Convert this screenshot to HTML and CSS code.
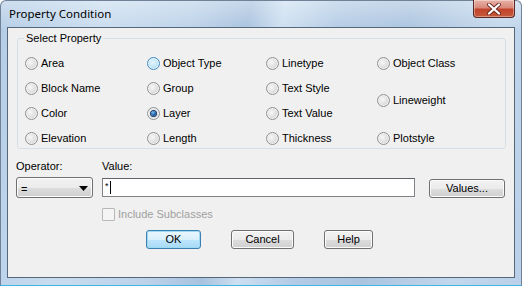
FILE: index.html
```html
<!DOCTYPE html>
<html lang="en">
<head>
    <meta charset="UTF-8">
    <title>Property Condition</title>
    <link rel="stylesheet" href="styles.css">
</head>
<body>
    <div class="window">
        <div class="titlebar">
            <span class="title">Property Condition</span>
            <div class="close">
                <svg width="16" height="12" viewBox="0 0 16 12">
                    <path d="M3 1.5 L13 10.5 M13 1.5 L3 10.5" stroke="#6b2b22" stroke-width="4" stroke-linecap="round"/>
                    <path d="M3 1.5 L13 10.5 M13 1.5 L3 10.5" stroke="#ffffff" stroke-width="2.2" stroke-linecap="round"/>
                </svg>
            </div>
        </div>

        <div class="client">
            <fieldset class="group">
                <legend>Select Property</legend>
                <div class="props">
                    <div class="opt"><span class="radio"></span>Area</div>
                    <div class="opt"><span class="radio hover"></span>Object Type</div>
                    <div class="opt"><span class="radio"></span>Linetype</div>
                    <div class="opt"><span class="radio"></span>Object Class</div>

                    <div class="opt"><span class="radio"></span>Block Name</div>
                    <div class="opt"><span class="radio"></span>Group</div>
                    <div class="opt"><span class="radio"></span>Text Style</div>
                    <div class="opt span2"><span class="radio"></span>Lineweight</div>

                    <div class="opt"><span class="radio"></span>Color</div>
                    <div class="opt"><span class="radio checked"></span>Layer</div>
                    <div class="opt"><span class="radio"></span>Text Value</div>

                    <div class="opt"><span class="radio"></span>Elevation</div>
                    <div class="opt"><span class="radio"></span>Length</div>
                    <div class="opt"><span class="radio"></span>Thickness</div>
                    <div class="opt"><span class="radio"></span>Plotstyle</div>
                </div>
            </fieldset>

            <div class="fields">
                <div class="field-label">Operator:</div>
                <div class="field-label">Value:</div>
                <div></div>

                <div class="select">
                    <span>=</span>
                    <svg width="9" height="5" viewBox="0 0 9 5"><path d="M0 0 H9 L4.5 5 Z" fill="#000"/></svg>
                </div>
                <div class="input"><span class="star">*</span><span class="caret"></span></div>
                <div class="btn values">Values...</div>

                <div></div>
                <div class="check"><span class="box"></span>Include Subclasses</div>
                <div></div>
            </div>

            <div class="actions">
                <div class="btn default ok">OK</div>
                <div class="btn cancel">Cancel</div>
                <div class="btn help">Help</div>
            </div>
        </div>
    </div>
</body>
</html>
```

FILE: styles.css
```css
body {
    margin: 0;
    font-family: "Liberation Sans", Arial, sans-serif;
    font-size: 11px;
    color: #000;
}
.window {
    width: 522px;
    height: 286px;
    box-sizing: border-box;
    display: flex;
    flex-direction: column;
    padding: 0 6px 7px 6px;
    border: 1px solid #6f8297;
    border-bottom-color: #3fb4e6;
    border-radius: 6px 6px 0 0;
    background:
        linear-gradient(to bottom, rgba(255,255,255,0.35), rgba(255,255,255,0) 30px),
        linear-gradient(100deg, #b4cde6 0%, #c9dcef 18%, #bcd2e9 34%, #a8c2de 44%, #cddff1 50%, #b3cbe5 60%, #aac4df 72%, #c3d7ec 88%, #b9d0e8 100%);
}
.titlebar {
    height: 26px;
    display: flex;
    justify-content: space-between;
    align-items: flex-start;
}
.title {
    font-family: "Noto Sans", sans-serif;
    font-size: 11.5px;
    line-height: 16px;
    padding: 5px 0 0 2px;
    color: #000;
}
.close {
    width: 40px;
    height: 17px;
    margin-top: -1px;
    border: 1px solid #5c2a24;
    border-top: none;
    border-radius: 0 0 4px 4px;
    display: flex;
    align-items: center;
    justify-content: center;
    background: linear-gradient(to bottom, #e8b2a8 0%, #d88a7a 45%, #c2432c 55%, #c55a3d 100%);
    box-shadow: inset 0 0 0 1px rgba(255,255,255,0.35);
}
.client {
    flex: 1;
    background: #f0f0f0;
    border: 1px solid #56677a;
    display: flex;
    flex-direction: column;
}
.group {
    margin: 4px 8px 0 9px;
    padding: 10px 0 2px 7px;
    border: 1px solid #d5dfe5;
    border-radius: 3px;
}
.group legend {
    padding: 0 2px;
    margin-left: -1px;
    line-height: 13px;
}
.props {
    display: grid;
    grid-template-columns: 122px 119px 111px auto;
    grid-template-rows: repeat(4, 16px);
    row-gap: 9px;
}
.opt {
    display: flex;
    align-items: center;
    gap: 3px;
    line-height: 13px;
}
.span2 {
    grid-column: 4;
    grid-row: 2 / span 2;
    align-self: center;
}
.radio {
    width: 11px;
    height: 11px;
    border-radius: 50%;
    border: 1px solid #8e9296;
    background: radial-gradient(circle at 40% 40%, #f8f8f8 0%, #e2e2e2 45%, #c9c9c9 100%);
    box-shadow: inset 0 0 0 1px #f2f2f2;
    display: flex;
    align-items: center;
    justify-content: center;
}
.radio.hover {
    border-color: #3c8bc3;
    background: radial-gradient(circle at 45% 40%, #e6f6fd 0%, #bfe6f8 50%, #8fcdee 100%);
}
.radio.checked::after {
    content: "";
    width: 5px;
    height: 5px;
    border-radius: 50%;
    background: radial-gradient(circle at 40% 35%, #7cc0f0 0%, #1e5fa8 55%, #0c2d62 100%);
    box-shadow: 0 0 0 1px #20406e;
}
.fields {
    display: grid;
    grid-template-columns: 77px 313px 81px;
    grid-template-rows: 18px 21px 23px;
    column-gap: 9px;
    margin: 10px 0 0 8px;
}
.field-label {
    line-height: 13px;
    padding-top: 1px;
}
.select {
    box-sizing: border-box;
    height: 21px;
    border: 1px solid #707070;
    border-radius: 3px;
    background: linear-gradient(to bottom, #f2f2f2 0%, #ebebeb 50%, #dddddd 51%, #cfcfcf 100%);
    box-shadow: inset 0 0 0 1px #fcfcfc;
    display: flex;
    align-items: center;
    justify-content: space-between;
    padding: 2px 4px 0 4px;
}
.input {
    box-sizing: border-box;
    height: 19px;
    margin-top: 1px;
    border: 1px solid #7f8388;
    border-top-color: #5e6369;
    background: #fff;
    display: flex;
    align-items: center;
    padding-left: 2px;
    line-height: 13px;
}
.star {
    font-size: 9px;
    align-self: flex-start;
    margin-top: 1px;
}
.caret {
    width: 1px;
    height: 13px;
    background: #000;
    margin-left: 1px;
}
.btn {
    box-sizing: border-box;
    height: 19px;
    border: 1px solid #707070;
    border-radius: 3px;
    background: linear-gradient(to bottom, #f2f2f2 0%, #ebebeb 50%, #dddddd 51%, #cfcfcf 100%);
    box-shadow: inset 0 0 0 1px #fbfbfb;
    display: flex;
    align-items: center;
    justify-content: center;
    line-height: 13px;
}
.values {
    width: 76px;
    justify-self: end;
    margin-top: 2px;
}
.check {
    display: flex;
    align-items: center;
    gap: 3px;
    margin-top: 10px;
    color: #a0a0a0;
    line-height: 13px;
}
.check .box {
    width: 11px;
    height: 11px;
    border: 1px solid #b8b8b8;
    background: #f4f4f4;
    border-radius: 1px;
}
.actions {
    display: flex;
    gap: 30px;
    margin: 9px 0 0 138px;
}
.btn.default {
    border-color: #3c7fb1;
    box-shadow: inset 0 0 0 1px #9fdaf4;
    background: linear-gradient(to bottom, #eaf6fd 0%, #d9f0fc 50%, #bee6fd 51%, #a7d9f5 100%);
}
.ok { width: 55px; }
.cancel { width: 63px; }
.help { width: 49px; }
```
